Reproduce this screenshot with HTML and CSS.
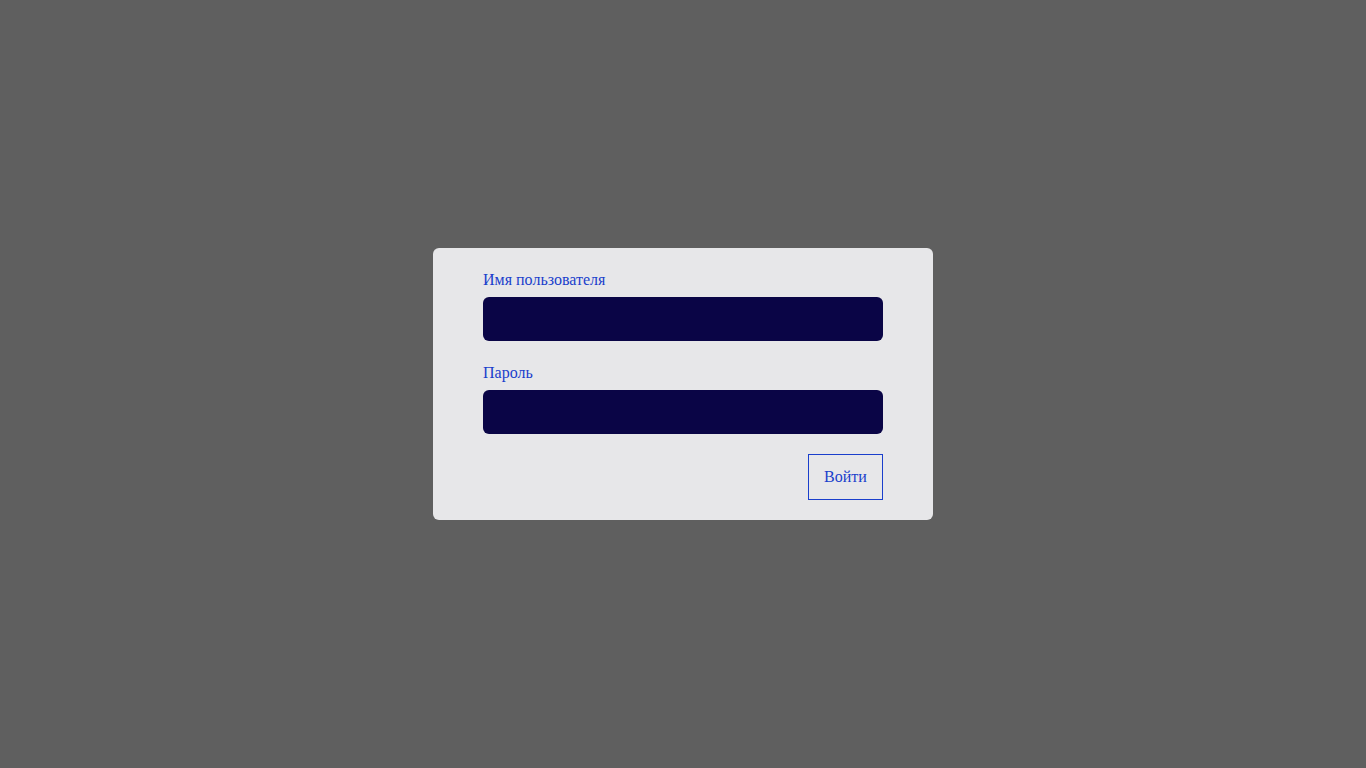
FILE: index.html
```html
<!DOCTYPE html>
<html lang="ru">
<head>
<meta charset="utf-8">
<title>Вход</title>
<link rel="stylesheet" href="styles.css">
</head>
<body>
<div class="page">
  <form class="card">
    <label class="label" for="user">Имя пользователя</label>
    <input class="field" id="user" type="text">
    <label class="label label-second" for="pass">Пароль</label>
    <input class="field" id="pass" type="password">
    <div class="actions">
      <button class="btn" type="button">Войти</button>
    </div>
  </form>
</div>
</body>
</html>
```

FILE: styles.css
```css
html, body {
  margin: 0;
  padding: 0;
  height: 100%;
}
body {
  background: #5f5f5f;
  font-family: "Liberation Serif", "Times New Roman", serif;
  font-size: 16px;
}
.page {
  height: 100%;
  display: flex;
  align-items: center;
  justify-content: center;
}
.card {
  box-sizing: border-box;
  width: 500px;
  height: 272px;
  background: #e7e7e9;
  border-radius: 6px;
  padding: 23px 50px 20px;
  display: flex;
  flex-direction: column;
}
.label {
  display: block;
  color: #1a3fcc;
  line-height: 18px;
  height: 18px;
  margin-bottom: 8px;
}
.label-second {
  margin-top: 23px;
}
.field {
  box-sizing: border-box;
  display: block;
  width: 400px;
  height: 44px;
  border: none;
  border-radius: 6px;
  background: #0a0546;
  margin: 0;
  padding: 0 12px;
  color: #fff;
  outline: none;
}
.actions {
  display: flex;
  justify-content: flex-end;
  margin-top: 20px;
}
.btn {
  box-sizing: border-box;
  width: 75px;
  height: 46px;
  background: transparent;
  border: 1px solid #1a3fcc;
  border-radius: 0;
  color: #1a3fcc;
  font-family: "Liberation Serif", "Times New Roman", serif;
  font-size: 16px;
  padding: 0;
  cursor: pointer;
}
```
